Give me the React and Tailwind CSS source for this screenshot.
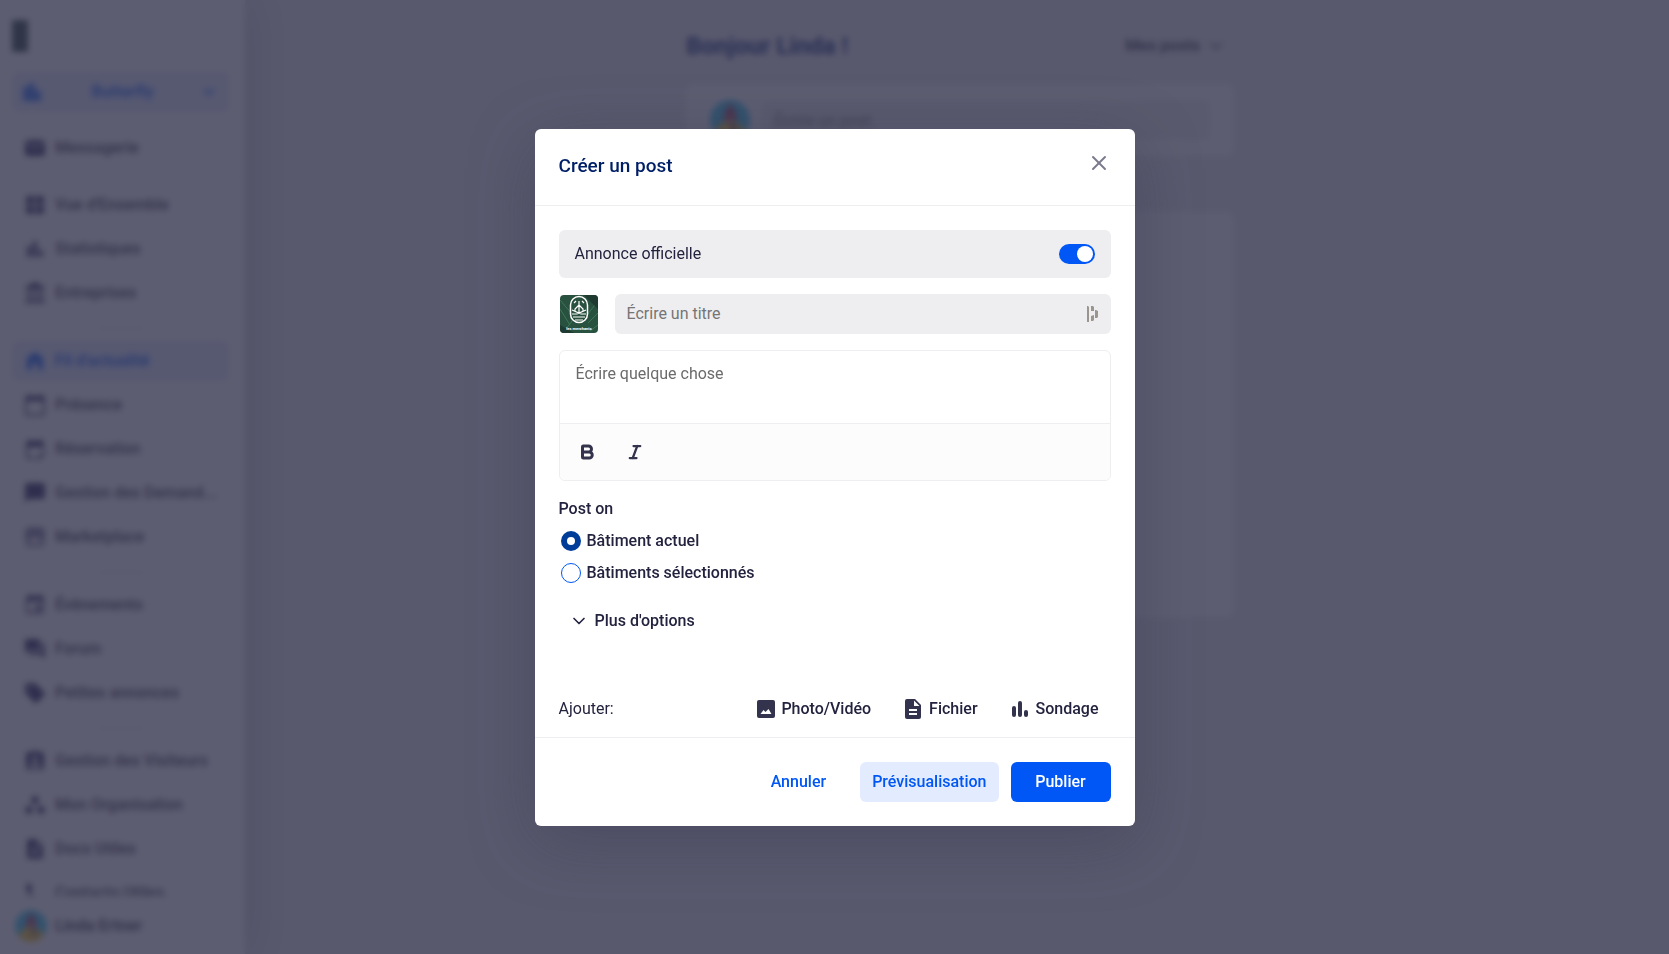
import React, { useState } from 'react';
import clsx from 'clsx';
import { Bold, ChevronDown, Italic, X } from 'lucide-react';
import {
  MdAccountBalance,
  MdAssignmentInd,
  MdBarChart,
  MdCalendarToday,
  MdCall,
  MdChatBubble,
  MdDescription,
  MdEditCalendar,
  MdEmail,
  MdEvent,
  MdForum,
  MdHomeFilled,
  MdLocationCity,
  MdSell,
  MdStorefront,
  MdWindow,
  MdWorkspaces,
} from 'react-icons/md';

const navGroups = [
  [
    { label: "Vue d'Ensemble", icon: MdWindow },
    { label: 'Statistiques', icon: MdBarChart },
    { label: 'Entreprises', icon: MdAccountBalance },
  ],
  [
    { label: "Fil d'actualité", icon: MdHomeFilled, active: true },
    { label: 'Présence', icon: MdCalendarToday },
    { label: 'Réservation', icon: MdEditCalendar },
    { label: 'Gestion des Demand...', icon: MdChatBubble },
    { label: 'Marketplace', icon: MdStorefront },
  ],
  [
    { label: 'Évènements', icon: MdEvent },
    { label: 'Forum', icon: MdForum },
    { label: 'Petites annonces', icon: MdSell },
  ],
  [
    { label: 'Gestion des Visiteurs', icon: MdAssignmentInd },
    { label: 'Mon Organisation', icon: MdWorkspaces },
    { label: 'Docs Utiles', icon: MdDescription },
    { label: 'Contacts Utiles', icon: MdCall },
  ],
];

const Avatar = ({ className }) => (
  <svg viewBox="0 0 40 40" className={clsx('shrink-0 rounded-full', className)} aria-hidden="true">
    <rect width="40" height="40" fill="#2cc4e8" />
    <path d="M3 40c0-11 7-18 17-18s17 7 17 18z" fill="#f5c518" />
    <circle cx="20" cy="19" r="5" fill="#c98a60" />
    <path d="M13 22c1-9 4-15 7-18 4 3 7 9 7 18l-7-5z" fill="#a83250" />
    <path d="M23 22l4 9-3 3-4-9z" fill="#5a3a4a" />
  </svg>
);

const BrandLogo = () => (
  <svg viewBox="0 0 38 38" className="m-px size-[38px] shrink-0 rounded" role="img" aria-label="Butterfly">
    <rect width="38" height="38" fill="#28513f" />
    <g stroke="#3f7657" strokeWidth="1" fill="none">
      <path d="M0 5l12 14M0 14l10 16M3 38l9-12M38 6L27 20M38 18L28 28M38 30l-8 6" />
    </g>
    <path d="M24 0h14v14zM0 30l14 8H0z" fill="#1e3a31" />
    <g stroke="#fff" fill="none" strokeWidth="1.5">
      <rect x="10.5" y="1.5" width="17" height="26" rx="8.5" />
      <path
        d="M19 6v12M19 10l-4 4v3M19 10l4 4v3M12 15l7 3 7-3M12 19h5l2-1 2 1h5M13 22h12M15 25h8"
        strokeWidth="1.2"
      />
      <path d="M14 8l2-2M24 8l-2-2" strokeWidth="1.2" />
    </g>
    <text x="19" y="35" textAnchor="middle" fontSize="4" fontWeight="700" fill="#fff" fontFamily="Roboto, sans-serif">
      les merchants
    </text>
  </svg>
);

const NavItem = ({ label, icon: Icon, active }) => (
  <a
    href="#"
    className={clsx(
      'flex h-10 shrink-0 items-center gap-2 rounded-md px-[11px] font-semibold',
      active ? 'bg-[#e0e9ff] text-[#0057f5]' : 'text-[#33334d]',
    )}
  >
    <Icon className={clsx('size-6 shrink-0', !active && 'text-[#1c1850]')} />
    <span className="whitespace-nowrap">{label}</span>
  </a>
);

const Sidebar = () => (
  <aside className="flex w-[245px] shrink-0 flex-col bg-white shadow-[4px_0_40px_rgba(40,40,80,0.25)]">
    <div className="pt-5 pr-4 pl-3">
      <div className="h-8 w-4 bg-[#1e3a31]" />
      <button
        type="button"
        className="mt-5 flex h-10 w-full items-center justify-between rounded-md bg-[#e0e9ff] px-2 font-semibold text-[#0057f5]"
      >
        <MdLocationCity className="size-6" />
        Butterfly
        <ChevronDown className="mr-1 size-4" strokeWidth={3} />
      </button>
    </div>
    <div className="py-2 pt-4 pr-4 pl-3">
      <NavItem label="Messagerie" icon={MdEmail} />
    </div>
    <nav className="min-h-0 flex-1 overflow-hidden border-t border-[#eeeef0] pt-2 pr-4 pl-3">
      {navGroups.map((group, i) => (
        <React.Fragment key={group[0].label}>
          {i > 0 && <hr className="mx-auto mt-[15px] mb-3 w-12 border-[#d8d8e0]" />}
          <div className="flex flex-col gap-1">
            {group.map((item) => (
              <NavItem key={item.label} {...item} />
            ))}
          </div>
        </React.Fragment>
      ))}
    </nav>
    <div className="flex h-[58px] shrink-0 items-center gap-2 border-t border-[#eeeef0] px-[15px] font-semibold">
      <Avatar className="size-8" />
      Linda Ertner
    </div>
  </aside>
);

const Feed = () => (
  <main className="min-w-0 flex-1 pl-1.5">
    <div className="mx-auto max-w-[548px]">
      <div className="flex h-[84px] items-center justify-between pt-2">
        <h1 className="text-2xl font-bold text-[#001f70]">Bonjour Linda !</h1>
        <button type="button" className="flex items-center gap-1.5 pr-2 font-semibold">
          Mes posts
          <ChevronDown className="size-5" />
        </button>
      </div>
      <div className="flex h-[72px] items-center gap-3 rounded-lg bg-white px-6">
        <Avatar className="size-10" />
        <input
          type="text"
          aria-label="Écrire un post"
          placeholder="Écrire un post"
          className="h-10 min-w-0 flex-1 rounded-md bg-[#eeeef0] px-3 placeholder:text-[#757575]"
        />
      </div>
      <div className="mt-14 h-[405px] rounded-lg bg-white" />
    </div>
  </main>
);

const Radio = ({ label, value, target, onChange }) => (
  <label className="flex h-8 items-center gap-1.5 pl-0.5 font-medium">
    <input
      type="radio"
      name="target"
      value={value}
      checked={target === value}
      onChange={() => onChange(value)}
      className="size-5 appearance-none rounded-full border border-[#0057f5] bg-white checked:border-[6px] checked:border-[#003d99]"
    />
    {label}
  </label>
);

const CreatePostModal = () => {
  const [official, setOfficial] = useState(true);
  const [target, setTarget] = useState('current');

  return (
    <div
      role="dialog"
      aria-modal="true"
      aria-labelledby="modal-title"
      className="w-full max-w-[600px] rounded-md bg-white shadow-[0_16px_64px_rgba(51,51,77,0.4)]"
    >
      <header className="flex h-[77px] items-center justify-between border-b border-[#eeeef0] px-6">
        <h2 id="modal-title" className="text-[19px] font-medium text-[#001f66]">
          Créer un post
        </h2>
        <button type="button" aria-label="Fermer" className="-mt-2 text-[#7a7a8c]">
          <X className="size-6" strokeWidth={2} />
        </button>
      </header>

      <form className="px-6 pt-6">
        <label className="flex h-12 items-center justify-between rounded-md bg-[#eeeef0] px-4">
          Annonce officielle
          <input
            type="checkbox"
            role="switch"
            checked={official}
            onChange={() => setOfficial(!official)}
            className="flex h-5 w-9 appearance-none items-center rounded-full bg-[#a0a0b0] px-0.5 before:size-4 before:rounded-full before:bg-white checked:justify-end checked:bg-[#0057f5]"
          />
        </label>

        <div className="mt-4 flex items-center gap-4">
          <BrandLogo />
          <div className="relative flex-1">
            <input
              type="text"
              aria-label="Écrire un titre"
              placeholder="Écrire un titre"
              className="h-10 w-full rounded-md bg-[#eeeef0] pr-10 pl-3 placeholder:text-[#757575]"
            />
            <svg viewBox="0 0 12 16" className="absolute top-3 right-3 h-4 w-3" fill="#9b9590" aria-hidden="true">
              <path d="M0 0h1l1 1v15H0zM4 0h2l1 1v4H4zM4 10l3-1v5l-1 1H4zM8 4h1l2 1v6l-1 1H8z" />
            </svg>
          </div>
        </div>

        <div className="mt-4 overflow-hidden rounded-md border border-[#eeeef0]">
          <textarea
            aria-label="Écrire quelque chose"
            placeholder="Écrire quelque chose"
            className="block h-[72px] w-full resize-none px-4 py-[11px] placeholder:text-[#6b6b6b]"
          />
          <div className="flex h-[57px] items-center gap-[30px] border-t border-[#eeeef0] bg-[#fcfcfc] px-[18px] text-[#33334d]">
            <button type="button" aria-label="Gras">
              <Bold className="size-[18px]" strokeWidth={4} />
            </button>
            <button type="button" aria-label="Italique">
              <Italic className="size-[18px]" strokeWidth={3} />
            </button>
          </div>
        </div>

        <fieldset className="mt-4">
          <legend className="mb-1 font-medium">Post on</legend>
          <Radio label="Bâtiment actuel" value="current" target={target} onChange={setTarget} />
          <Radio label="Bâtiments sélectionnés" value="selected" target={target} onChange={setTarget} />
        </fieldset>

        <button type="button" className="mt-3 flex h-10 items-center gap-1.5 px-2.5 font-medium">
          <ChevronDown className="size-5" />
          Plus d&apos;options
        </button>

        <div className="mt-12 flex h-10 items-center">
          <span className="mr-auto">Ajouter:</span>
          <div className="flex items-center gap-[34px] pr-3 font-medium">
            <button type="button" className="flex items-center gap-1.5">
              <svg viewBox="0 0 18 18" className="size-[18px]" aria-hidden="true">
                <rect width="18" height="18" rx="2" fill="#33334d" />
                <path d="M3.500 14l3-4 2 2 1-1 2-2 3 5z" fill="#fff" />
              </svg>
              Photo/Vidéo
            </button>
            <button type="button" className="flex items-center gap-2">
              <svg viewBox="0 0 16 20" className="h-5 w-4" aria-hidden="true">
                <path d="M2 0h8l6 6v12a2 2 0 0 1-2 2H2a2 2 0 0 1-2-2V2a2 2 0 0 1 2-2z" fill="#33334d" />
                <path d="M9 1.500V7h5.500zM4 10h8v2H4zM4 14h8v2H4z" fill="#fff" />
              </svg>
              Fichier
            </button>
            <button type="button" className="flex items-center gap-2">
              <svg viewBox="0 0 16 16" className="size-4" fill="#33334d" aria-hidden="true">
                <rect y="5" width="4" height="11" rx="2" />
                <rect x="6" width="4" height="16" rx="2" />
                <rect x="12" y="9" width="4" height="7" rx="2" />
              </svg>
              Sondage
            </button>
          </div>
        </div>
      </form>

      <footer className="mt-2 flex justify-end gap-3 border-t border-[#eeeef0] p-6 font-medium">
        <button type="button" className="h-10 rounded-md px-[22px] text-[#0057f5]">
          Annuler
        </button>
        <button type="button" className="h-10 rounded-md bg-[#e3ecff] px-3 text-[#0057f5]">
          Prévisualisation
        </button>
        <button type="button" className="h-10 min-w-[100px] rounded-md bg-[#0057f5] px-6 text-white">
          Publier
        </button>
      </footer>
    </div>
  );
};

const App = () => {
  return (
    <div className="font-[Roboto,sans-serif] text-base text-[#23233f]">
      <div className="flex h-screen overflow-hidden bg-[#eaeaee]">
        <Sidebar />
        <Feed />
      </div>
      <div className="fixed inset-0 flex items-center justify-center bg-[#34344d]/80 backdrop-blur-[3px]">
        <CreatePostModal />
      </div>
    </div>
  );
};

export default App;
